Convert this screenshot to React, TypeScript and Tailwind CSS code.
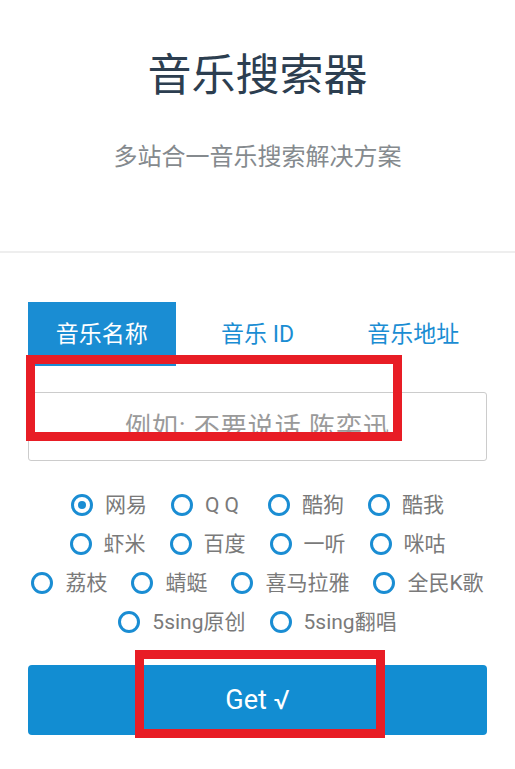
import React, { useState } from 'react';

const tabs = ['音乐名称', '音乐 ID', '音乐地址'];

const sourceRows = [
  ['网易', 'QQ', '酷狗', '酷我'],
  ['虾米', '百度', '一听', '咪咕'],
  ['荔枝', '蜻蜓', '喜马拉雅', '全民K歌'],
  ['5sing原创', '5sing翻唱'],
];

const App: React.FC = () => {
  const [activeTab, setActiveTab] = useState(0);
  const [source, setSource] = useState('网易');

  return (
    <div className="relative min-h-screen bg-white font-['Roboto','Noto_Sans_CJK_SC',sans-serif]">
      {/* Header */}
      <header className="border-b-2 border-[#eeeeee] pt-[55px] pb-[82px]">
        <h1 className="text-center text-[44px] leading-[43px] text-[#2c3e50]">音乐搜索器</h1>
        <p className="mt-[47px] text-center text-[24px] leading-[24px] text-[#858a8e]">多站合一音乐搜索解决方案</p>
      </header>

      <main className="px-[28px] pt-[49px]">
        {/* Tabs */}
        <div className="flex gap-[8px]">
          {tabs.map((tab, i) => (
            <button
              key={tab}
              onClick={() => setActiveTab(i)}
              className={`h-[64px] w-[148px] text-[23px] leading-[23px] ${
                activeTab === i ? 'bg-[#1a8dd3] text-white' : 'bg-white text-[#1a8dd3]'
              }`}
            >
              {tab}
            </button>
          ))}
        </div>

        {/* Input */}
        <input
          type="text"
          placeholder="例如: 不要说话 陈奕迅"
          className="mt-[26px] block h-[69px] w-full rounded-[3px] border border-[#cccccc] text-center text-[26px] tracking-[1px] text-[#555] outline-none placeholder:text-[#9a9a9a]"
        />

        {/* Sources */}
        <div className="mt-[33px] flex flex-col gap-[17px]">
          {sourceRows.map((row, r) => (
            <div key={r} className="flex justify-center gap-x-[24px]">
              {row.map((name) => (
                <label key={name} className="flex h-[22px] cursor-pointer items-center gap-[12px]" onClick={() => setSource(name)}>
                  <span className="flex h-[22px] w-[22px] items-center justify-center rounded-full border-[3px] border-[#1a8dd3]">
                    {source === name && <span className="h-[8px] w-[8px] rounded-full bg-[#1a8dd3]" />}
                  </span>
                  <span className={`text-[21px] leading-[22px] text-[#7a7a7a] ${name === 'QQ' ? 'tracking-[5px]' : ''}`}>{name}</span>
                </label>
              ))}
            </div>
          ))}
        </div>

        {/* Submit */}
        <button className="mt-[32px] flex h-[70px] w-full items-center justify-center rounded-[4px] bg-[#128dd2] text-[27px] text-white">
          Get √
        </button>
      </main>

      {/* Annotation boxes */}
      <div className="pointer-events-none absolute left-[26px] top-[355px] h-[86px] w-[376px] border-[9px] border-[#e81d25]" />
      <div className="pointer-events-none absolute left-[135px] top-[650px] h-[88px] w-[250px] border-[9px] border-[#e81d25]" />
    </div>
  );
};

export default App;
